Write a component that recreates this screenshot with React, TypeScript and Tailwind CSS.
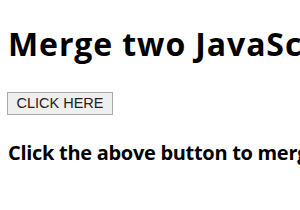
export default function App() {
  return (
    <div className="w-[300px] h-[210px] overflow-hidden bg-white pt-[24px] pl-[8px] text-black font-['Open_Sans',sans-serif]">
      <h1 className="text-[32px] leading-[40px] font-bold tracking-[0.9px] whitespace-nowrap">
        Merge two JavaScript objects
      </h1>
      <button className="mt-[28px] -ml-px h-[23px] w-[106px] flex items-center justify-center border border-[#a9a9a9] bg-[#efefef] text-[14.5px] text-[#222] font-['Liberation_Sans',Arial,sans-serif]">
        CLICK HERE
      </button>
      <p className="mt-[26px] text-[20px] leading-[24px] font-bold tracking-[-0.3px] whitespace-nowrap">
        Click the above button to merge the objects
      </p>
    </div>
  );
}
